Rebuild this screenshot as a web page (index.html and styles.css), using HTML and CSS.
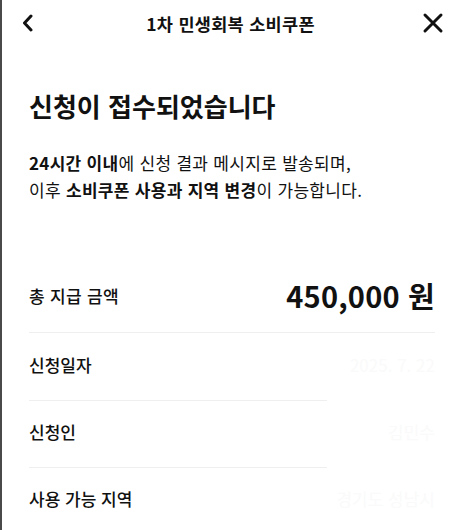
FILE: index.html
```html
<!DOCTYPE html>
<html lang="ko">

<head>
    <meta charset="UTF-8">
    <meta name="viewport" content="width=device-width, initial-scale=1.0">
    <title>1차 민생회복 소비쿠폰</title>
    <link rel="stylesheet" href="styles.css">
</head>

<body>
    <div class="screen">
        <!-- Top bar -->
        <header class="topbar">
            <button class="icon-btn" aria-label="뒤로">
                <svg width="14" height="18" viewBox="0 0 14 18">
                    <path d="M10 2 L3.5 9 L10 16" fill="none" stroke="#111" stroke-width="3" stroke-linecap="round" stroke-linejoin="round"/>
                </svg>
            </button>
            <div class="topbar-title">1차 민생회복 소비쿠폰</div>
            <button class="icon-btn" aria-label="닫기">
                <svg width="22" height="22" viewBox="0 0 22 22">
                    <path d="M3 3 L19 19 M19 3 L3 19" fill="none" stroke="#111" stroke-width="3" stroke-linecap="round"/>
                </svg>
            </button>
        </header>

        <main class="content">
            <h1>신청이 접수되었습니다</h1>
            <p class="desc">
                <b>24시간 이내</b>에 신청 결과 메시지로 발송되며,<br>
                이후 <b>소비쿠폰 사용과 지역 변경</b>이 가능합니다.
            </p>

            <div class="total">
                <span class="total-label">총 지급 금액</span>
                <span class="total-amount">450,000 원</span>
            </div>

            <ul class="info-list">
                <li>
                    <span class="label">신청일자</span>
                    <span class="value">2025. 7. 22</span>
                </li>
                <li>
                    <span class="label">신청인</span>
                    <span class="value">김민수</span>
                </li>
                <li>
                    <span class="label">사용 가능 지역</span>
                    <span class="value">경기도 성남시</span>
                </li>
            </ul>
        </main>
    </div>
</body>
</html>
```

FILE: styles.css
```css
body {
    margin: 0;
    background: #fff;
    font-family: "Noto Sans CJK KR", "Noto Sans", sans-serif;
    color: #111;
}

.screen {
    min-height: 530px;
    border-left: 2px solid #4a4a4a;
    box-sizing: border-box;
}

.topbar {
    display: flex;
    align-items: center;
    justify-content: space-between;
    height: 46px;
    padding: 0 14px 0 14px;
}

.icon-btn {
    background: none;
    border: none;
    padding: 0;
    width: 24px;
    height: 24px;
    display: flex;
    align-items: center;
    justify-content: center;
    cursor: pointer;
}

.topbar-title {
    font-size: 17.5px;
    font-weight: 700;
    letter-spacing: 0.3px;
}

.content {
    padding: 0 24px 0 27px;
}

h1 {
    margin: 42px 0 0;
    font-size: 26px;
    font-weight: 700;
    line-height: 36px;
}

.desc {
    margin: 25px 0 0;
    font-size: 17px;
    line-height: 27px;
    letter-spacing: 0.3px;
}

.desc b {
    font-weight: 700;
}

.total {
    display: flex;
    justify-content: space-between;
    align-items: center;
    margin-top: 71px;
    padding-bottom: 16px;
    border-bottom: 1px solid #efefef;
}

.total-label {
    font-size: 17px;
    font-weight: 500;
    letter-spacing: 0.3px;
}

.total-amount {
    font-size: 29px;
    font-weight: 700;
    letter-spacing: 0.2px;
}

.info-list {
    list-style: none;
    margin: 0;
    padding: 0;
}

.info-list li {
    position: relative;
    display: flex;
    justify-content: space-between;
    align-items: center;
    height: 67px;
    padding-bottom: 4px;
    box-sizing: border-box;
}

.info-list li + li::before {
    content: "";
    position: absolute;
    top: 0;
    left: 0;
    width: 298px;
    border-top: 1px solid #efefef;
}

.label {
    font-size: 17px;
    font-weight: 500;
}

.value {
    font-size: 17px;
    color: #fafafa;
}
```
